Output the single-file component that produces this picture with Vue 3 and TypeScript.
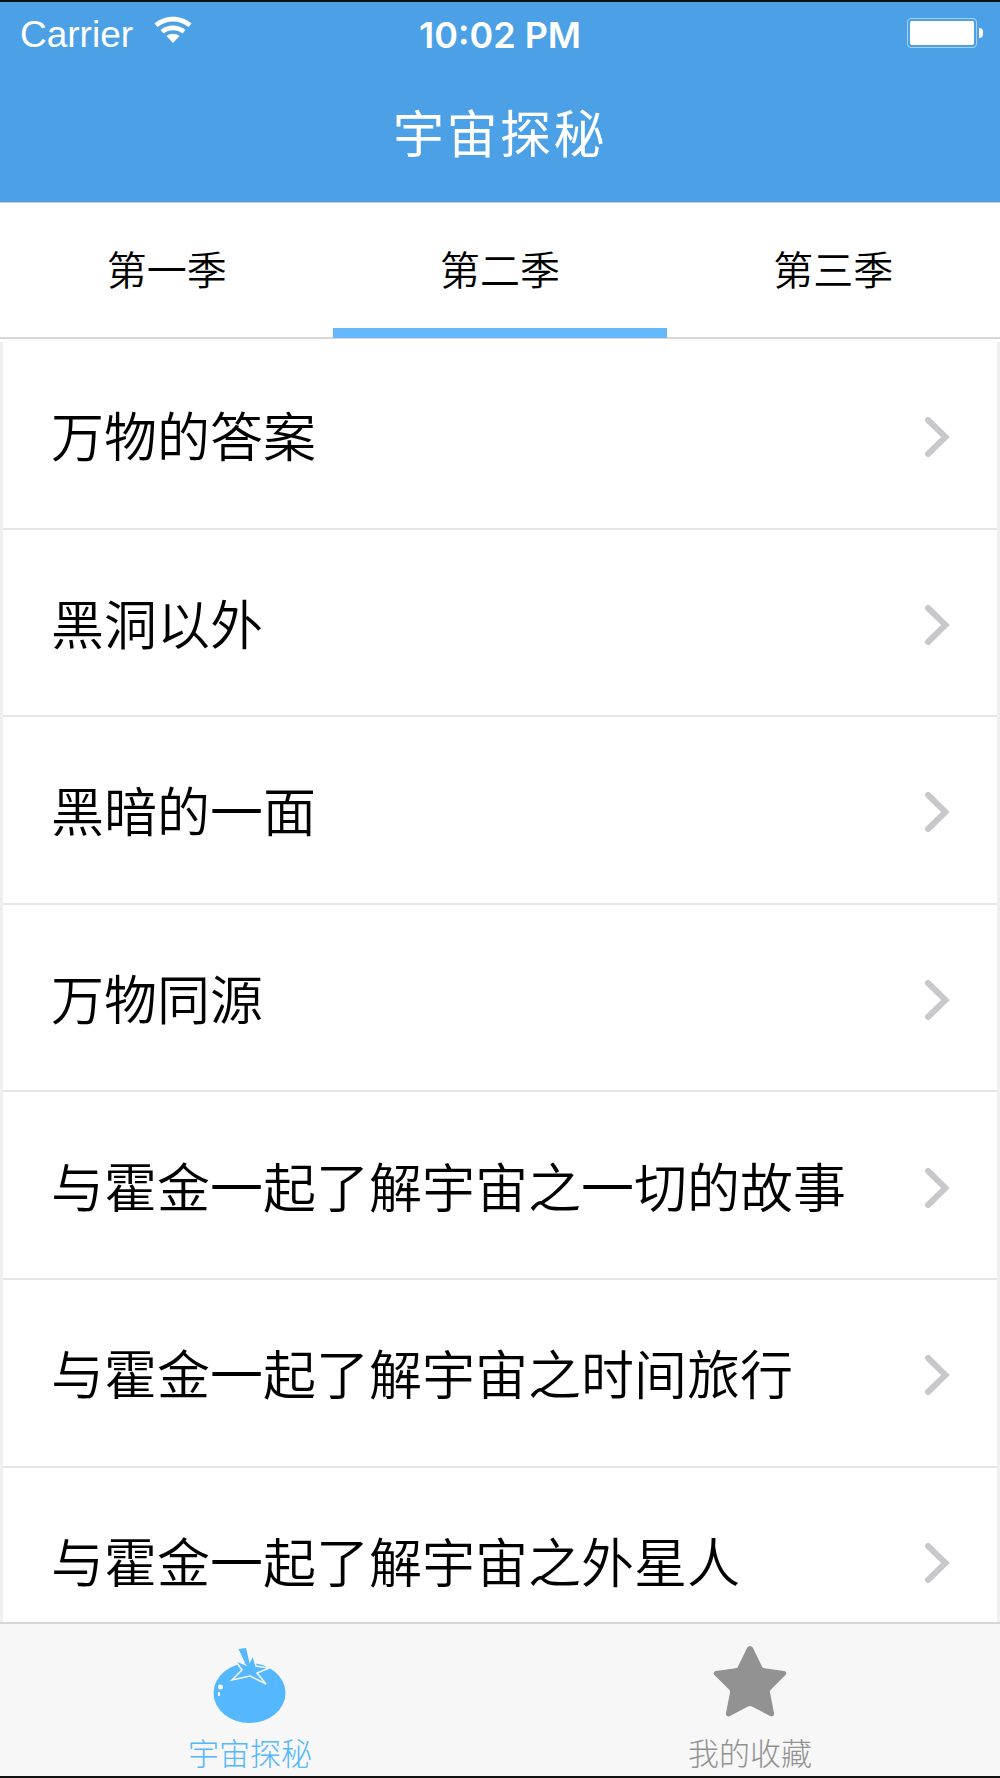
<script setup lang="ts">
// 宇宙探秘：季度分頁 + 集數列表 + 底部 TabBar
const seasons = ['第一季', '第二季', '第三季']
const activeSeason = 1
const episodes = [
  '万物的答案',
  '黑洞以外',
  '黑暗的一面',
  '万物同源',
  '与霍金一起了解宇宙之一切的故事',
  '与霍金一起了解宇宙之时间旅行',
  '与霍金一起了解宇宙之外星人',
]
</script>

<template>
  <div class="page">
    <header class="nav">
      <div class="status">
        <div class="status__left">
          <span class="carrier">Carrier</span>
          <svg class="wifi" width="40" height="30" viewBox="0 0 40 30">
            <path d="M1.500 9.500C11.500 0.500 28.500 0.500 38.500 9.500L35.500 13C27 5.500 13 5.500 4.500 13Z" fill="#fff" />
            <path d="M7.500 16C14 10 26 10 32.500 16L29.500 19.500C24.500 15 15.500 15 10.500 19.500Z" fill="#fff" />
            <path d="M13.500 22C17 19 23 19 26.500 22L20 29Z" fill="#fff" />
          </svg>
        </div>
        <span class="time">10:02 PM</span>
        <div class="battery">
          <div class="battery__body"><div class="battery__fill" /></div>
          <div class="battery__tip" />
        </div>
      </div>
      <h1 class="nav__title">宇宙探秘</h1>
    </header>

    <div class="tabs">
      <div v-for="(s, i) in seasons" :key="s" class="tab" :class="{ 'tab--active': i === activeSeason }">{{ s }}</div>
    </div>

    <main class="list">
      <div v-for="ep in episodes" :key="ep" class="row">
        <span class="row__title">{{ ep }}</span>
        <svg class="row__arrow" width="26" height="42" viewBox="0 0 26 42">
          <path d="M4 4L21.500 21L4 38" fill="none" stroke="#c7c7cc" stroke-width="6" stroke-linecap="round" stroke-linejoin="miter" />
        </svg>
      </div>
    </main>

    <footer class="tabbar">
      <div class="tabbar__item tabbar__item--active">
        <div class="tabbar__icon">
          <svg class="tomato" width="74" height="76" viewBox="0 0 74 76">
            <ellipse cx="36.500" cy="45" rx="36" ry="30" fill="#55b8ff" />
            <path d="M22 12L33 17L36 15L40 7L43 18L56 20L44 25L53 36L37 28L19 32L29 22Z" fill="#55b8ff" stroke="#f7f7f7" stroke-width="1.500" stroke-linejoin="miter" />
            <path d="M25.500 1L33 0L37 17L33 17Z" fill="#55b8ff" />
            <circle cx="7.500" cy="39" r="2.500" fill="#f7f7f7" />
            <ellipse cx="6" cy="46" rx="1.200" ry="2.200" fill="#f7f7f7" />
          </svg>
        </div>
        <span class="tabbar__label">宇宙探秘</span>
      </div>
      <div class="tabbar__item">
        <div class="tabbar__icon">
          <svg width="76" height="76" viewBox="0 0 76 76">
            <path d="M38 2C39.500 2 40.500 3 41 4L50 22.500C50.500 23.500 51 24 52.500 24.200L72 27C74.500 27.500 75 29.500 73.500 31L59 45.500C58 46.500 58 47.500 58 48.500L62 69C62.500 72 60.500 73 58 72L40 62.500C38.500 61.800 37.500 61.800 36 62.500L18 72C15.500 73 13.500 72 14 69L18 48.500C18 47.500 18 46.500 17 45.500L2.500 31C1 29.500 1.500 27.500 4 27L23.500 24.200C25 24 25.500 23.500 26 22.500L35 4C35.500 3 36.500 2 38 2Z" fill="#929292" />
          </svg>
        </div>
        <span class="tabbar__label">我的收藏</span>
      </div>
    </footer>
  </div>
</template>

<style scoped>
.page {
  display: flex;
  flex-direction: column;
  width: 1000px;
  height: 1778px;
  overflow: hidden;
  box-sizing: border-box;
  border-top: 2px solid #111;
  border-bottom: 2px solid #111;
  background: #fff;
  font-family: "Noto Sans CJK SC", "Liberation Sans", sans-serif;
}

.nav {
  height: 201px;
  flex: none;
  box-sizing: border-box;
  background: #4ca1e6;
  border-bottom: 1px solid #c9c9c9;
  color: #fff;
}

.status {
  position: relative;
  display: flex;
  align-items: center;
  justify-content: space-between;
  height: 66px;
  padding: 0 17px 0 20px;
  font-family: "Liberation Sans", sans-serif;
}

.status__left {
  display: flex;
  align-items: center;
  gap: 20px;
}

.carrier {
  font-size: 37px;
  line-height: 62px;
}

.wifi {
  margin-top: -12px;
}

.time {
  position: absolute;
  left: 0;
  right: 0;
  text-align: center;
  font-family: Inter, "Liberation Sans", sans-serif;
  font-size: 36px;
  line-height: 66px;
  font-weight: 600;
}

.battery {
  display: flex;
  align-items: center;
  gap: 2px;
  margin-top: -4px;
}

.battery__body {
  width: 70px;
  height: 30px;
  box-sizing: border-box;
  padding: 2px;
  border: 1px solid #a6d0f3;
  border-radius: 4px;
}

.battery__fill {
  height: 100%;
  background: #fff;
  border-radius: 2px;
}

.battery__tip {
  width: 4px;
  height: 10px;
  background: #fff;
  border-radius: 0 4px 4px 0;
}

.nav__title {
  margin: 0;
  text-align: center;
  font-size: 51px;
  line-height: 126px;
  font-weight: 400;
  letter-spacing: 2.5px;
}

.tabs {
  display: grid;
  grid-template-columns: repeat(3, 1fr);
  flex: none;
  height: 136px;
  box-sizing: border-box;
  border-bottom: 2px solid #d8d8d8;
}

.tab {
  display: flex;
  align-items: center;
  justify-content: center;
  padding-bottom: 6px;
  font-size: 40px;
  font-weight: 350;
  color: #000;
}

.tab--active {
  height: 135px;
  box-sizing: border-box;
  border-bottom: 10px solid #65b9fb;
  padding-top: 5px;
  padding-bottom: 0;
}

.list {
  flex: 1;
  min-height: 0;
  overflow: hidden;
  margin-top: 3px;
  border-left: 3px solid #efefef;
  border-right: 3px solid #efefef;
}

.row {
  display: flex;
  align-items: center;
  justify-content: space-between;
  box-sizing: border-box;
  height: 187.6px;
  padding: 0 47px 0 48px;
  border-bottom: 2px solid #e6e6e6;
}

.row__title {
  font-size: 53px;
  line-height: 1;
  font-weight: 350;
  color: #000;
}

.row__arrow {
  margin-top: 5px;
}

.tabbar {
  display: grid;
  grid-template-columns: 1fr 1fr;
  flex: none;
  height: 154px;
  box-sizing: border-box;
  background: #f7f7f7;
  border-top: 2px solid #d6d6d6;
}

.tabbar__item {
  display: flex;
  flex-direction: column;
  align-items: center;
  padding-top: 20px;
  color: #929292;
}

.tabbar__item--active {
  color: #55b8ff;
}

.tabbar__icon {
  height: 80px;
}

.tomato {
  display: block;
  margin-top: 4px;
}

.tabbar__label {
  margin-top: 10px;
  font-size: 31px;
  line-height: 36px;
  font-weight: 300;
  white-space: nowrap;
}
</style>

<style>
html,
body {
  margin: 0;
  padding: 0;
}
</style>
